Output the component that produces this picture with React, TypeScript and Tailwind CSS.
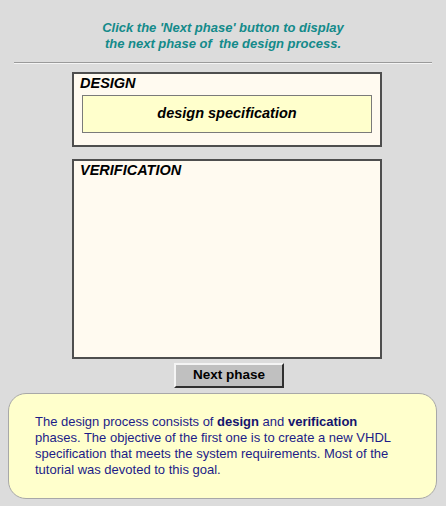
export default function App() {
  return (
    <div className="w-[446px] h-[506px] bg-[#dcdcdc] flex flex-col font-['Liberation_Sans',Arial,sans-serif] overflow-hidden">
      {/* instruction */}
      <div className="pt-[20px] text-center text-[13px] leading-[16px] font-bold italic text-[#138a8a]">
        <p>Click the 'Next phase' button to display</p>
        <p>the next phase of&nbsp; the design process.</p>
      </div>

      <div className="mt-[10px] mx-[14px] h-[2px] border-t border-t-[#9a9a9a] border-b border-b-[#f4f4f4]" />

      {/* design phase */}
      <div className="mt-[8px] ml-[72px] w-[310px] h-[75px] border-2 border-[#4e4e4e] bg-[#fffaf0] flex flex-col">
        <div className="pl-[6px] pt-[1px] text-[14.5px] leading-[16px] font-bold italic text-black">DESIGN</div>
        <div className="mt-[4px] ml-[8px] w-[290px] h-[38px] border border-[#7a7a7a] bg-[#ffffcc] flex items-center justify-center text-[14.5px] font-bold italic text-black">
          design specification
        </div>
      </div>

      {/* verification phase */}
      <div className="mt-[12px] ml-[72px] w-[310px] h-[200px] border-2 border-[#4e4e4e] bg-[#fffaf0]">
        <div className="pl-[6px] pt-[1px] text-[14.5px] leading-[16px] font-bold italic text-black">VERIFICATION</div>
      </div>

      <button className="mt-[4px] ml-[174px] w-[110px] h-[25px] bg-[#c0c0c0] border-2 border-t-[#f4f4f4] border-l-[#f4f4f4] border-r-[#303030] border-b-[#303030] text-[13.5px] font-bold text-black flex items-center justify-center">
        Next phase
      </button>

      {/* explanation */}
      <div className="mt-[5px] ml-[8px] w-[429px] h-[106px] rounded-[18px] border border-[#a8a8a8] bg-[#ffffcc] pl-[26px] pr-[10px] pt-[20px] text-[13px] leading-[16px] text-[#1c1c88] whitespace-nowrap">
        The design process consists of <b className="text-[#14146e]">design</b> and{" "}
        <b className="text-[#14146e]">verification</b>
        <br />
        phases. The objective of the first one is to create a new VHDL
        <br />
        specification that meets the system requirements. Most of the
        <br />
        tutorial was devoted to this goal.
      </div>
    </div>
  );
}
